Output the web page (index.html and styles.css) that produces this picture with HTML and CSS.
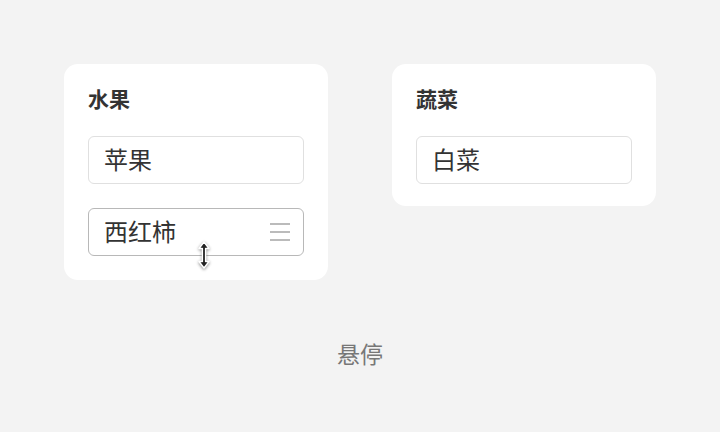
FILE: index.html
```html
<!DOCTYPE html>
<html lang="zh-CN">
<head>
    <meta charset="UTF-8">
    <meta name="viewport" content="width=device-width, initial-scale=1.0">
    <title>分组列表</title>
    <link rel="stylesheet" href="styles.css">
</head>
<body>

    <div class="page">
        <div class="groups">
            <div class="group">
                <h2 class="group-title">水果</h2>
                <ul class="items">
                    <li class="item">苹果</li>
                    <li class="item is-hover">
                        西红柿
                        <span class="handle"><i></i><i></i><i></i></span>
                        <!-- 上下拖动光标 -->
                        <svg class="cursor" width="14" height="28" viewBox="0 0 14 28">
                            <polygon points="7,1 12,7.5 8.6,7.5 8.6,20.5 12,20.5 7,27 2,20.5 5.4,20.5 5.4,7.5 2,7.5"
                                     fill="#222" stroke="#fff" stroke-width="1.4" stroke-linejoin="round"/>
                        </svg>
                    </li>
                </ul>
            </div>

            <div class="group">
                <h2 class="group-title">蔬菜</h2>
                <ul class="items">
                    <li class="item">白菜</li>
                </ul>
            </div>
        </div>

        <p class="caption">悬停</p>
    </div>

</body>
</html>
```

FILE: styles.css
```css
body {
    margin: 0;
    background-color: #f3f3f3;
    color: #333;
    font-family: "Noto Sans CJK SC", "Noto Sans", sans-serif;
}
.page {
    padding: 64px;
}
.groups {
    display: flex;
    gap: 64px;
    align-items: flex-start;
}
.group {
    width: 264px;
    box-sizing: border-box;
    padding: 24px 24px 22px;
    background-color: #fff;
    border-radius: 14px;
}
.group-title {
    margin: 0 0 28px;
    font-size: 21px;
    line-height: 20px;
    font-weight: 700;
    color: #333;
}
.items {
    list-style: none;
    margin: 0;
    padding: 0;
    display: flex;
    flex-direction: column;
    gap: 24px;
}
.item {
    position: relative;
    height: 48px;
    box-sizing: border-box;
    padding: 0 15px 3px;
    display: flex;
    align-items: center;
    border: 1px solid #e0e0e0;
    border-radius: 6px;
    font-size: 24px;
    color: #333;
}
/* 悬停状态：边框加深，显示拖动手柄 */
.item.is-hover {
    border-color: #b8b8b8;
    margin-bottom: 2px;
}
.handle {
    margin-left: auto;
    margin-right: -2px;
    margin-top: 3px;
    width: 20px;
    display: flex;
    flex-direction: column;
    gap: 6px;
}
.handle i {
    display: block;
    height: 2px;
    background-color: #bbb;
}
.cursor {
    position: absolute;
    left: 108px;
    top: 32px;
    filter: drop-shadow(0 1px 1.5px rgba(0, 0, 0, 0.45));
}
.caption {
    margin: 60px 0 0;
    text-align: center;
    font-size: 23px;
    line-height: 26px;
    color: #777;
}
```
